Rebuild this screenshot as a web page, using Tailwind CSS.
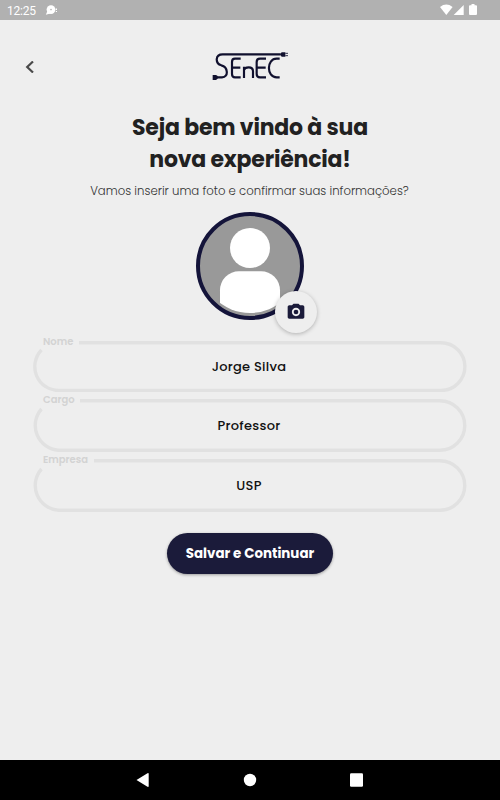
<!DOCTYPE html>
<html lang="pt-BR">
<head>
    <meta charset="UTF-8">
    <meta name="viewport" content="width=device-width, initial-scale=1.0">
    <title>SEnEC</title>
    <script src="https://cdn.jsdelivr.net/npm/@tailwindcss/browser@4"></script>
</head>
<body class="bg-[#eeeeee] w-[500px] h-[800px] flex flex-col overflow-hidden font-[Poppins,Inter,sans-serif]">
    <!-- Status bar -->
    <div class="h-5 shrink-0 bg-[#b1b1b1] flex items-center text-white">
        <span class="ml-[7px] w-[38px] pt-px font-[Roboto,sans-serif] text-[12px] leading-5 tracking-[-0.2px]">12:25</span>
        <svg class="w-3 h-[11px]" viewBox="0 0 12 11" fill="currentColor">
            <circle cx="6" cy="4.6" r="4.4"/>
            <path d="M2.5 6L0.8 9.8l4.5-1.2z"/>
            <path d="M10.8 3.5h1.2v1.5h-1.2zM10.8 6h1.2v1h-1.2z"/>
            <circle cx="6" cy="4.6" r="0.8" fill="#b1b1b1"/>
        </svg>
        <svg class="ml-auto mr-[23px] w-[37px] h-[12px]" viewBox="0 0 37 12" fill="currentColor">
            <path d="M0 3Q6.3-1.8 12.6 3L6.3 11z"/>
            <path d="M13.7 11L23.7 1v10z"/>
            <path d="M30 1.2h1.5V0h3v1.2H36q1 0 1 1V10q0 1-1 1h-6q-1 0-1-1V2.2q0-1 1-1z"/>
        </svg>
    </div>

    <!-- Header -->
    <header class="h-[92px] shrink-0 grid grid-cols-[200px_100px_200px] pt-5">
        <svg class="ml-6 mt-[21px] w-3 h-3" viewBox="0 0 12 12" fill="none" stroke="#4a4a4a" stroke-width="2.2">
            <path d="M9 0.5L3.2 6L9 11.5"/>
        </svg>
        <svg class="w-[100px] h-[50px]" viewBox="0 0 300 150" fill="none" stroke="#10102e" stroke-width="6.5">
            <path d="M242 43H68C45 43 45 70 64 76C84 80 87 112 66 112H48"/>
            <path d="M122 56H105Q96 56 96 66V102Q96 112 105 112H122M97 83H121"/>
            <path d="M132 114V80M132 90Q134 82 146 82Q159 82 159 94V114"/>
            <path d="M198 56H180Q170 56 170 66V102Q170 112 180 112H198M171 83H197"/>
            <path d="M239 56H230C199 56 199 112 230 112H239"/>
            <path d="M38 105h10l5 3v8l-5 4H38zM240 43l5-6h11v13h-11z" fill="#10102e" stroke="none"/>
            <path d="M256 40h8M256 47h8" stroke-width="2.5"/>
        </svg>
    </header>

    <!-- Welcome text -->
    <h1 class="h-16 shrink-0 text-center text-[22px] leading-8 font-bold text-[#212121] whitespace-nowrap">
        <span class="block tracking-[-0.2px]">Seja bem vindo à sua</span>
        <span class="block tracking-[-0.2px]">nova experiência!</span>
    </h1>
    <p class="mt-[5px] h-5 shrink-0 pr-px text-center text-[11.7px] leading-5 font-light text-[#333333] whitespace-nowrap">Vamos inserir uma foto e confirmar suas informações?</p>

    <!-- Profile picture -->
    <div class="relative mt-[11px] w-[108px] h-[108px] shrink-0 mx-auto">
        <svg class="w-full h-full" viewBox="0 0 108 108">
            <clipPath id="photo"><circle cx="54" cy="51" r="50"/></clipPath>
            <circle cx="54" cy="54" r="52" fill="#999999" stroke="#14143a" stroke-width="4"/>
            <circle cx="54" cy="36" r="20" fill="#ffffff"/>
            <rect x="24" y="59.3" width="60" height="60" rx="19" fill="#ffffff" clip-path="url(#photo)"/>
        </svg>
        <button class="absolute left-[79px] top-[79px] w-[42px] h-[42px] rounded-full bg-[#eeeeee] shadow-[0_1px_4px_rgba(0,0,0,0.26)] flex items-center justify-center">
            <svg class="w-5 h-5 -mt-px" viewBox="0 0 24 24" fill="#1b1b3a">
                <circle cx="12" cy="12" r="2.8"/>
                <path d="M9 2L7.17 4H4c-1.1 0-2 .9-2 2v12c0 1.1.9 2 2 2h16c1.1 0 2-.9 2-2V6c0-1.1-.9-2-2-2h-3.17L15 2H9zm3 15c-2.76 0-5-2.24-5-5s2.24-5 5-5 5 2.24 5 5-2.24 5-5 5z"/>
            </svg>
        </button>
    </div>

    <!-- Form fields, outlines are open where the label stands -->
    <form class="mt-[21px] mx-[33px] shrink-0 flex flex-col">
        <div class="relative h-[51px] flex items-center justify-center">
            <svg class="absolute inset-0 w-[434px] h-[51px]" viewBox="0 0 434 51" fill="none" stroke="#e1e1e1" stroke-width="3.4">
                <path d="M8.5 9A23.9 23.9 0 0 0 25.5 49.5H408A23.9 23.9 0 0 0 408 1.7H46"/>
            </svg>
            <label class="absolute left-[10px] -top-[7px] text-[10px] leading-4 font-semibold text-[#d3d3d3]">Nome</label>
            <span class="pr-[2px] text-[13px] leading-5 font-medium tracking-[0.25px] text-[#111111]">Jorge Silva</span>
        </div>
        <div class="relative mt-[7px] h-[53px] flex items-center justify-center">
            <svg class="absolute inset-0 w-[434px] h-[53px]" viewBox="0 0 434 53" fill="none" stroke="#e1e1e1" stroke-width="3.4">
                <path d="M8.5 10A24.8 24.8 0 0 0 25.5 51.2H407A24.75 24.75 0 0 0 407 1.7H47"/>
            </svg>
            <label class="absolute left-[10px] -top-[7px] text-[10px] leading-4 font-semibold text-[#d3d3d3]">Cargo</label>
            <span class="pr-[2px] text-[13px] leading-5 font-medium tracking-[0.3px] text-[#111111]">Professor</span>
        </div>
        <div class="relative mt-[7px] h-[53px] flex items-center justify-center">
            <svg class="absolute inset-0 w-[434px] h-[53px]" viewBox="0 0 434 53" fill="none" stroke="#e1e1e1" stroke-width="3.4">
                <path d="M8.5 10A24.8 24.8 0 0 0 25.5 51.2H407A24.75 24.75 0 0 0 407 1.7H61"/>
            </svg>
            <label class="absolute left-[10px] -top-[7px] text-[10px] leading-4 font-semibold text-[#d3d3d3]">Empresa</label>
            <span class="pr-[2px] text-[13px] leading-5 font-medium tracking-[0.3px] text-[#111111]">USP</span>
        </div>
    </form>

    <button class="mt-[21px] mx-auto shrink-0 w-[166px] h-[41px] pt-0.5 rounded-full bg-[#1b1b3a] text-white text-[13.4px] font-bold whitespace-nowrap shadow-[0_1px_3px_rgba(0,0,0,0.35)]">Salvar e Continuar</button>

    <!-- Navigation bar -->
    <nav class="mt-auto h-10 shrink-0 bg-black">
        <svg class="w-[500px] h-10" viewBox="0 0 500 40" fill="#ffffff">
            <path d="M136.5 20L147.5 13.2Q148.7 12.7 148.7 14V26Q148.7 27.3 147.5 26.8z"/>
            <circle cx="250" cy="20" r="6.2"/>
            <rect x="350" y="13.3" width="13" height="13.4" rx="1.2"/>
        </svg>
    </nav>
</body>
</html>
